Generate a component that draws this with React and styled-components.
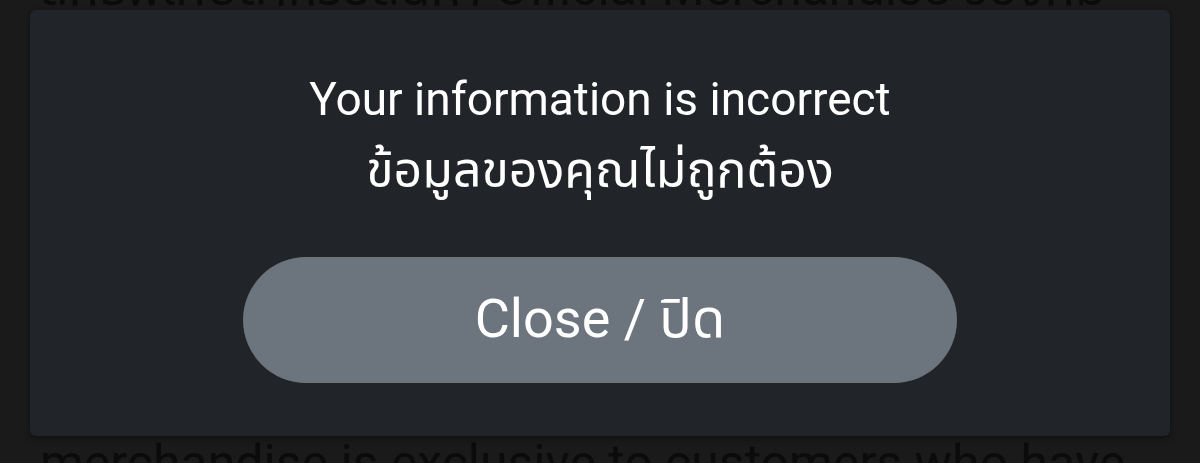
import React from 'react';
import styled, { createGlobalStyle } from 'styled-components';

const GlobalStyle = createGlobalStyle`
  html, body {
    margin: 0;
    padding: 0;
    background: #1a1a1a;
    overflow: hidden;
  }
  body {
    font-family: Roboto, "Noto Sans", "Noto Sans Thai", sans-serif;
  }
`;

const Page = styled.div`
  width: 1200px;
  height: 463px;
  overflow: hidden;
  padding: 0 40px;
  box-sizing: border-box;
`;

const Article = styled.div`
  margin-top: -41px;
  font-size: 50px;
  line-height: 59.4px;
  color: #0b0b0b;
`;

const Line = styled.div`
  white-space: nowrap;
`;

const Backdrop = styled.div`
  position: fixed;
  inset: 0;
  padding: 10px 30px 27px;
  box-sizing: border-box;
`;

const Modal = styled.div`
  height: 100%;
  background: #212428;
  border-radius: 6px;
  box-shadow: 0 2px 6px rgba(0, 0, 0, 0.45);
  display: flex;
  flex-direction: column;
  align-items: center;
  padding-top: 54px;
  box-sizing: border-box;
`;

const Message = styled.div`
  color: #ffffff;
  text-align: center;
`;

const MessageLine = styled.div`
  font-size: ${({ $size }) => $size}px;
  line-height: ${({ $height }) => $height}px;
  white-space: nowrap;
`;

const CloseButton = styled.button`
  margin-top: 51px;
  width: 714px;
  height: 126px;
  border: none;
  border-radius: 63px;
  background: #6c757d;
  color: #ffffff;
  font-family: Roboto, "Noto Sans", "Noto Sans Thai", sans-serif;
  font-size: 54px;
  cursor: pointer;
`;

const lines = [
  'สิทธิ์พิเศษสำหรับสินค้า Official Merchandise ของทีม',
  'เฉพาะลูกค้าที่ลงทะเบียนกับเราเท่านั้น กรุณา',
  'กรอกข้อมูลของคุณให้ถูกต้องเพื่อยืนยันตัวตน',
  'ก่อนทำการสั่งซื้อสินค้า',
  'This official',
  '',
  '',
  '',
  'merchandise is exclusive to customers who have',
];

export default function App() {
  return (
    <>
      <GlobalStyle />
      <Page>
        <Article>
          {lines.map((l, i) => (
            <Line key={i}>{l || '\u00a0'}</Line>
          ))}
        </Article>
      </Page>
      <Backdrop>
        <Modal>
          <Message>
            <MessageLine $size={46} $height={70}>Your information is incorrect</MessageLine>
            <MessageLine $size={50} $height={72}>ข้อมูลของคุณไม่ถูกต้อง</MessageLine>
          </Message>
          <CloseButton>Close / ปิด</CloseButton>
        </Modal>
      </Backdrop>
    </>
  );
}
